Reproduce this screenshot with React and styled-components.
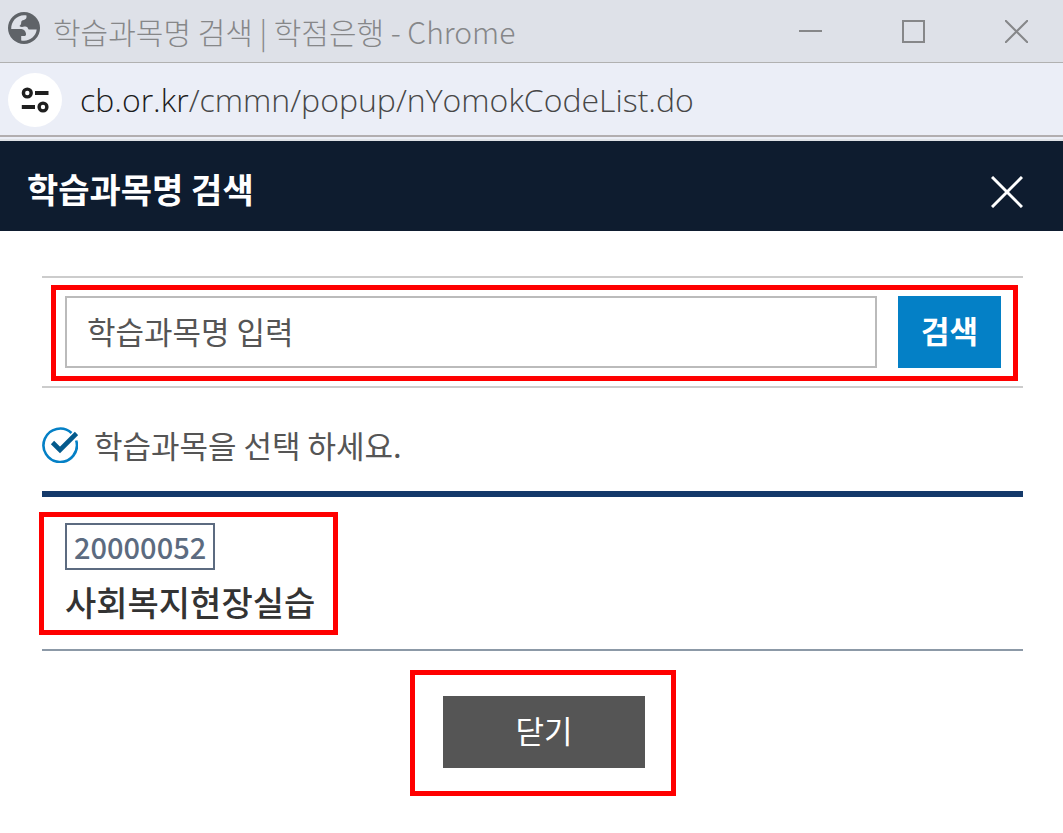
import React, { useState } from 'react';
import styled, { createGlobalStyle } from 'styled-components';

const GlobalStyle = createGlobalStyle`
  * {
    box-sizing: border-box;
  }
  body {
    margin: 0;
    background: #fff;
    font-family: 'Noto Sans CJK KR', 'Noto Sans', sans-serif;
  }
`;

const Button = styled.button`
  display: flex;
  align-items: center;
  justify-content: center;
  padding: 0;
  border: none;
  font-family: inherit;
  cursor: pointer;
`;

const TitleBar = styled.div`
  display: flex;
  align-items: center;
  height: 63px;
  padding-left: 8px;
  background: #dee1e8;
  border-bottom: 1px solid #b1b1b1;
  color: #868789;
`;

const SiteIcon = styled.span`
  display: flex;
  padding-bottom: 6px;
`;

const WindowTitle = styled.div`
  flex: 1;
  margin-left: 13px;
  font-weight: 300;
  font-size: 30px;
  line-height: 44px;
  white-space: nowrap;
`;

const WindowControls = styled.div`
  display: flex;
  gap: 9px;
`;

const WindowButton = styled(Button)`
  width: 94px;
  height: 62px;
  background: transparent;
  color: #868789;
`;

const AddressBar = styled.div`
  display: flex;
  align-items: center;
  gap: 18px;
  height: 74px;
  padding: 2px 0 0 8px;
  background: #ebeef7;
  border-bottom: 2px solid #b2aeb0;
`;

const SiteButton = styled(Button)`
  width: 54px;
  height: 54px;
  border-radius: 50%;
  background: #fff;
`;

const Url = styled.div`
  font-family: 'Open Sans', sans-serif;
  font-size: 32px;
  font-weight: 300;
  line-height: 40px;
  color: #474747;
`;

const Domain = styled.span`
  color: #1c1c1c;
`;

const Divider = styled.div`
  height: 4px;
  background: #ebeef7;
  border-bottom: 2px solid #dfe2e6;
`;

const PopupHeader = styled.header`
  display: flex;
  align-items: center;
  justify-content: space-between;
  height: 90px;
  padding: 12px 40px 0 27px;
  background: #0e1c2f;
  color: #fff;
`;

const PopupTitle = styled.h1`
  margin: 0 0 6px;
  font-size: 34px;
  font-weight: 700;
  line-height: 48px;
`;

const HeaderClose = styled(Button)`
  width: 32px;
  height: 32px;
  background: transparent;
  color: #fff;
`;

const Content = styled.main`
  padding: 45px 40px 65px 42px;
`;

// red frame drawn over the step the user has to follow
const Marker = styled.div`
  position: absolute;
  inset: ${(props) => props.$inset};
  border: 5px solid #f00;
  pointer-events: none;
`;

const SearchForm = styled.form`
  position: relative;
  display: flex;
  gap: 21px;
  padding: 18px 22px 18px 23px;
  border-top: 2px solid #ccc;
  border-bottom: 2px solid #ccc;
`;

const SearchInput = styled.input`
  flex: 1;
  min-width: 0;
  height: 72px;
  padding: 0 20px 4px;
  border: 2px solid #bbb;
  border-radius: 0;
  font-family: inherit;
  font-size: 31px;
  color: #555;
  &::placeholder {
    color: #555;
    opacity: 1;
  }
`;

const SearchButton = styled(Button)`
  width: 103px;
  height: 72px;
  padding-bottom: 6px;
  background: #0480c6;
  color: #fff;
  font-size: 31px;
  font-weight: 700;
`;

const Guide = styled.p`
  display: flex;
  align-items: center;
  gap: 16px;
  height: 103px;
  margin: 0;
  padding-top: 10px;
  font-size: 31px;
  line-height: 44px;
  color: #555;
`;

const SubjectList = styled.ul`
  margin: 0;
  padding: 0;
  list-style: none;
  border-top: 6px solid #14396a;
`;

const SubjectItem = styled.li`
  display: flex;
  padding: 26px 23px 23px;
  border-bottom: 2px solid #8c99a7;
`;

const Subject = styled.a`
  position: relative;
  display: flex;
  flex-direction: column;
  align-items: flex-start;
  gap: 8px;
  color: #333;
  text-decoration: none;
`;

const SubjectCode = styled.span`
  padding: 0 7px;
  border: 2px solid #5c6b80;
  color: #5c6b80;
  font-size: 29px;
  font-weight: 500;
  line-height: 43px;
`;

const SubjectName = styled.strong`
  font-size: 34px;
  font-weight: 500;
  line-height: 48px;
`;

const Actions = styled.div`
  display: flex;
  justify-content: center;
  padding: 45px 0 0 23px;
`;

const MarkedAction = styled.div`
  position: relative;
`;

const CloseButton = styled(Button)`
  width: 202px;
  height: 72px;
  padding-bottom: 6px;
  background: #555;
  color: #fff;
  font-size: 31px;
`;

const GlobeIcon = () => (
  <svg width="32" height="32" viewBox="0 0 32 32" aria-hidden="true">
    <circle cx="16" cy="16" r="16" fill="#5f6368" />
    <path
      d="M3.200 17C3 9.500 8.500 3.300 16 3.200c1 0 1.800.2 2.500.4C18.800 6 18 7.500 16 8c-1.800.3-2.800.8-2.800 2.500 0 1.500-.4 2.500-1.800 3.500 1.200 1.200 3 1.200 5 .6 1.800-.5 3 .2 3.600 1.800.3.800 1 1.200 2 1.200h6.700C28 24 22.500 28.800 16 28.800c-1 0-2-.1-2.800-.3V24h2.600c1.800 0 2.400-.9 2.200-2.300-.3-2.700-2-4.300-4.600-4.700z"
      fill="#dee1e8"
    />
  </svg>
);

const TuneIcon = () => (
  <svg width="28" height="28" viewBox="0 0 28 28" fill="none" stroke="#1f1f1f" aria-hidden="true">
    <circle cx="6.300" cy="7" r="3.900" strokeWidth="3.400" />
    <circle cx="22" cy="21" r="3.900" strokeWidth="3.400" />
    <path d="M14 7h13.500M.8 21H14" strokeWidth="3.800" />
  </svg>
);

const CheckIcon = () => (
  <svg width="36" height="36" viewBox="0 0 36 36" fill="none" aria-hidden="true">
    <path d="M29.500 6A16.700 16.700 0 1 0 34.200 13.500" stroke="#0480c6" strokeWidth="2.600" />
    <path d="M10.500 15.500l7.500 7.500L34.500 6.500" stroke="#045a8c" strokeWidth="4.600" />
  </svg>
);

function BrowserChrome() {
  return (
    <>
      <TitleBar>
        <SiteIcon>
          <GlobeIcon />
        </SiteIcon>
        <WindowTitle>학습과목명 검색 | 학점은행 - Chrome</WindowTitle>
        <WindowControls>
          <WindowButton type="button" aria-label="최소화">
            <svg width="23" height="23" viewBox="0 0 23 23">
              <path d="M0 11h23" stroke="currentColor" strokeWidth="2" />
            </svg>
          </WindowButton>
          <WindowButton type="button" aria-label="최대화">
            <svg width="23" height="23" viewBox="0 0 23 23">
              <path d="M1 1h21v21H1z" fill="none" stroke="currentColor" strokeWidth="2" />
            </svg>
          </WindowButton>
          <WindowButton type="button" aria-label="창 닫기">
            <svg width="23" height="23" viewBox="0 0 23 23">
              <path d="M0 0l23 23M23 0L0 23" stroke="currentColor" strokeWidth="2" />
            </svg>
          </WindowButton>
        </WindowControls>
      </TitleBar>
      <AddressBar>
        <SiteButton type="button" aria-label="사이트 정보">
          <TuneIcon />
        </SiteButton>
        <Url>
          <Domain>cb.or.kr</Domain>/cmmn/popup/nYomokCodeList.do
        </Url>
      </AddressBar>
      <Divider />
    </>
  );
}

function App() {
  const [keyword, setKeyword] = useState('');

  return (
    <>
      <GlobalStyle />
      <BrowserChrome />
      <PopupHeader>
        <PopupTitle>학습과목명 검색</PopupTitle>
        <HeaderClose type="button" aria-label="닫기">
          <svg width="32" height="32" viewBox="0 0 32 32">
            <path d="M1 1l30 30M31 1L1 31" stroke="currentColor" strokeWidth="3" />
          </svg>
        </HeaderClose>
      </PopupHeader>
      <Content>
        <SearchForm onSubmit={(e) => e.preventDefault()}>
          <SearchInput
            type="text"
            aria-label="학습과목명"
            placeholder="학습과목명 입력"
            value={keyword}
            onChange={(e) => setKeyword(e.target.value)}
          />
          <SearchButton type="submit">검색</SearchButton>
          <Marker $inset="7px 5px 5px 9px" />
        </SearchForm>
        <Guide>
          <CheckIcon />
          학습과목을 선택 하세요.
        </Guide>
        <SubjectList>
          <SubjectItem>
            <Subject href="#">
              <SubjectCode>20000052</SubjectCode>
              <SubjectName>사회복지현장실습</SubjectName>
              <Marker $inset="-11px -23px -9px -26px" />
            </Subject>
          </SubjectItem>
        </SubjectList>
        <Actions>
          <MarkedAction>
            <CloseButton type="button">닫기</CloseButton>
            <Marker $inset="-26px -31px -28px -33px" />
          </MarkedAction>
        </Actions>
      </Content>
    </>
  );
}

export default App;
